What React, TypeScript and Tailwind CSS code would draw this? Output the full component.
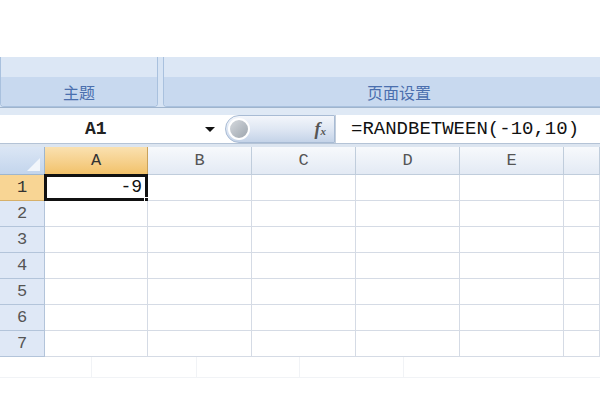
import React from "react";

const mono = { fontFamily: '"Liberation Mono", "DejaVu Sans Mono", monospace' };

const columns = [
  { key: "A", width: "w-[103px]" },
  { key: "B", width: "w-[104px]" },
  { key: "C", width: "w-[104px]" },
  { key: "D", width: "w-[104px]" },
  { key: "E", width: "w-[104px]" },
  { key: "F", width: "flex-1" },
];

const rows = [1, 2, 3, 4, 5, 6, 7];

function RibbonGroup({ label, className }: { label: string; className: string }) {
  return (
    <div
      className={`shrink-0 flex flex-col rounded-b-[4px] border border-t-0 border-[#a9c1de] overflow-hidden ${className}`}
    >
      <div className="h-[20px] bg-[#dce7f5]" />
      <div className="flex-1 bg-[#c8d9ef] flex items-center justify-center text-[16px] text-[#4a6fae] [font-family:'Noto_Sans_CJK_SC',sans-serif]">
        {label}
      </div>
    </div>
  );
}

function FormulaBar() {
  return (
    <div className="flex h-[28px] bg-white" style={mono}>
      <div className="w-[225px] flex items-center">
        <span className="ml-[85px] text-[18px] font-bold text-[#222]">A1</span>
        <span className="ml-auto mr-[10px] w-0 h-0 border-l-[5px] border-r-[5px] border-t-[5px] border-l-transparent border-r-transparent border-t-[#111]" />
      </div>
      <div className="w-[110px] flex items-center rounded-l-full bg-gradient-to-b from-[#f3f6fb] via-[#dfe7f3] to-[#c4d3e8] border border-[#a8bbd4]">
        <div className="ml-[2px] w-[22px] h-[22px] rounded-full bg-gradient-to-br from-[#d5d9de] to-[#9ea6ae] border-2 border-white" />
        <span className="ml-auto mr-[8px] text-[18px] italic font-bold text-[#555] [font-family:'Liberation_Serif',serif]">
          f<span className="text-[11px]">x</span>
        </span>
      </div>
      <div className="flex-1 flex items-center border-l border-[#c3cedc] pl-[15px] text-[19px] text-[#111]">
        =RANDBETWEEN(-10,10)
      </div>
    </div>
  );
}

function HeaderRow() {
  return (
    <div className="flex h-[28px]" style={mono}>
      <div className="w-[45px] relative bg-gradient-to-b from-[#dbe6f5] to-[#c3d5ec] border-r border-b border-[#9eb6ce]">
        <div className="absolute right-[4px] bottom-[3px] w-0 h-0 border-l-[13px] border-t-[13px] border-l-transparent border-t-transparent border-b-0 border-r-[13px] border-r-[#f2f6fb]" />
      </div>
      {columns.map((c) =>
        c.key === "A" ? (
          <div
            key={c.key}
            className={`${c.width} flex items-center justify-center bg-gradient-to-b from-[#fae1b0] to-[#f2c26a] border-r border-b border-[#c9a25c] text-[17px] text-[#333]`}
          >
            {c.key}
          </div>
        ) : (
          <div
            key={c.key}
            className={`${c.width} flex items-center justify-center bg-gradient-to-b from-[#f7f9fc] to-[#e3eaf4] border-r border-b border-[#c0cddc] text-[17px] text-[#555]`}
          >
            {c.key === "F" ? "" : c.key}
          </div>
        )
      )}
    </div>
  );
}

function GridRow({ n }: { n: number }) {
  const active = n === 1;
  return (
    <div className="flex h-[26px]" style={mono}>
      <div
        className={`w-[45px] flex items-center justify-center border-r border-b text-[17px] ${
          active
            ? "bg-[#f8d594] border-[#d6b06a] text-[#333]"
            : "bg-[#dfe8f6] border-[#b3c4da] text-[#555]"
        }`}
      >
        {n}
      </div>
      {columns.map((c) => (
        <div
          key={c.key}
          className={`${c.width} relative flex items-center justify-end bg-white border-r border-b border-[#d5dbe5] text-[18px] text-[#111]`}
        >
          {active && c.key === "A" && (
            <>
              <span className="pr-[5px]">-9</span>
              <div className="absolute -left-px -top-px -right-px -bottom-px border-[3px] border-[#111]" />
              <div className="absolute -right-[4px] -bottom-[4px] w-[7px] h-[7px] bg-[#111] border border-white" />
            </>
          )}
        </div>
      ))}
    </div>
  );
}

export default function App() {
  return (
    <div className="w-[600px] h-[400px] overflow-hidden bg-white flex flex-col">
      <div className="h-[57px] bg-white" />
      <div className="h-[50px] flex bg-[#d7e4f4] gap-[5px]">
        <RibbonGroup label="主题" className="w-[158px]" />
        <RibbonGroup label="页面设置" className="w-[472px]" />
      </div>
      <div className="h-[8px] bg-[#dfe9f5] border-t border-[#9fb4cd]" />
      <FormulaBar />
      <div className="h-[4px] bg-[#dce5f0] border-t border-[#b4c3d6]" />
      <HeaderRow />
      {rows.map((n) => (
        <GridRow key={n} n={n} />
      ))}
      <div className="h-[21px] flex border-b border-[#f1f3f6]">
        <div className="w-[92px] border-r border-[#f1f3f6]" />
        <div className="w-[105px] border-r border-[#f1f3f6]" />
        <div className="w-[103px] border-r border-[#f1f3f6]" />
        <div className="w-[104px] border-r border-[#f1f3f6]" />
      </div>
    </div>
  );
}
